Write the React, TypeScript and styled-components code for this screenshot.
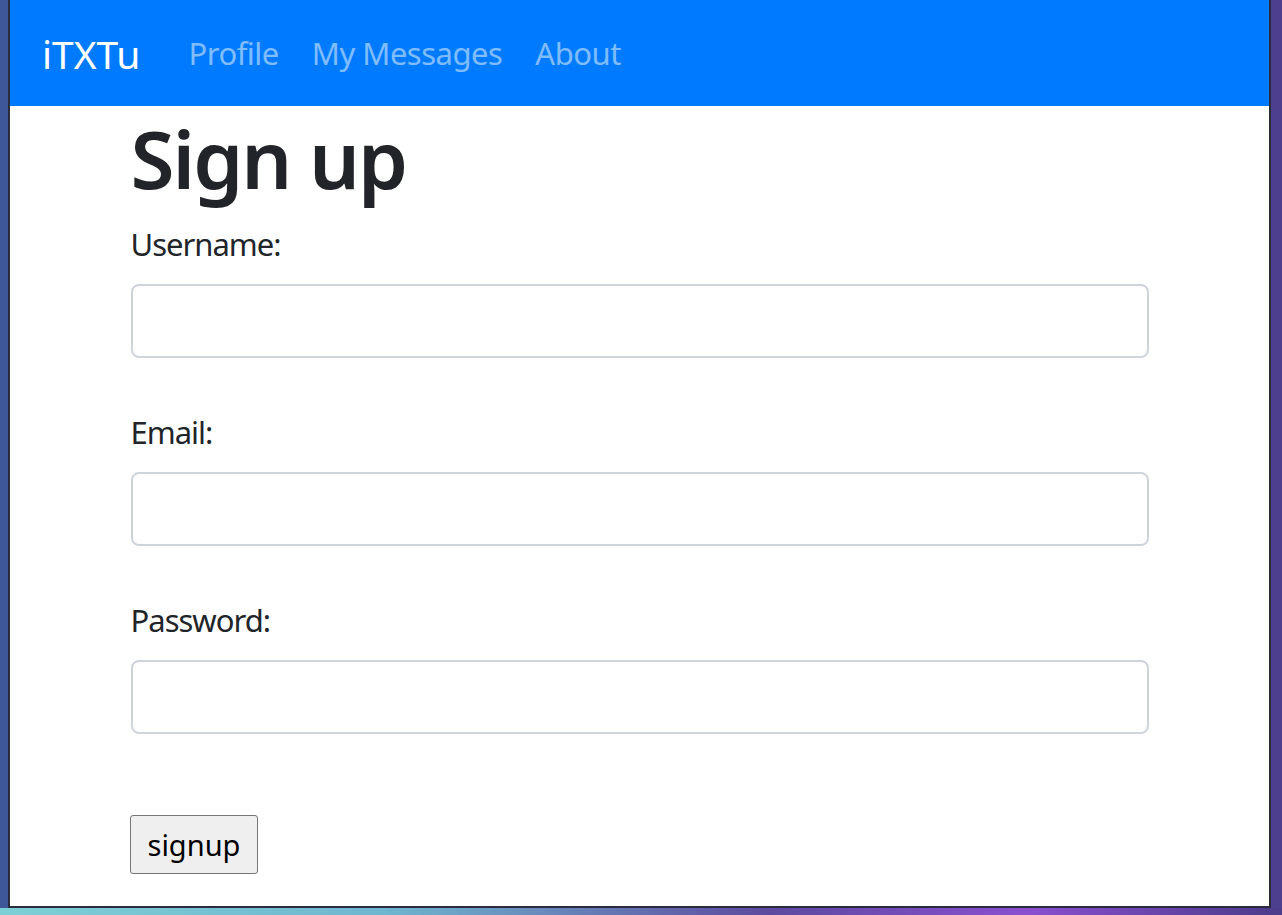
import React from 'react'
import styled, { createGlobalStyle } from 'styled-components'

const GlobalStyle = createGlobalStyle`
  html, body {
    margin: 0;
    padding: 0;
  }
  body {
    font-family: "Noto Sans", "Open Sans", Arial, sans-serif;
    background: linear-gradient(90deg, #3e5799 0%, #44508f 50%, #4d3f8e 100%);
  }
`

const Desktop = styled.div`
  width: 1282px;
  height: 915px;
  box-sizing: border-box;
  padding: 0 11px 0 8px;
  background:
    linear-gradient(90deg, #7dcfd6 0%, #6fb6cf 30%, #5d4aa0 60%, #8a4fd0 80%, #4b3c8a 100%) bottom / 100% 7px no-repeat,
    linear-gradient(90deg, #3e5799 0%, #44508f 50%, #4d3f8e 100%);
  overflow: hidden;
`

const Window = styled.div`
  height: 906px;
  background: #fff;
  border: 2px solid #2a2c3e;
  border-top: 0;
  display: flex;
  flex-direction: column;
`

const Navbar = styled.nav`
  height: 106px;
  flex-shrink: 0;
  background: #007bff;
  display: flex;
  align-items: center;
  padding-left: 32px;
`

const Brand = styled.a`
  font-size: 39px;
  color: #fff;
  text-decoration: none;
  margin-right: 48px;
`

const NavLinks = styled.div`
  display: flex;
  gap: 33px;
`

const NavLink = styled.a`
  font-size: 31px;
  color: rgba(255, 255, 255, 0.5);
  text-decoration: none;
  letter-spacing: -0.5px;
`

const Container = styled.main`
  width: 1078px;
  box-sizing: border-box;
  padding: 0 30px;
  margin: 0 auto;
  color: #212529;
`

const Title = styled.h1`
  font-size: 80px;
  line-height: 96px;
  font-weight: 600;
  margin: 4px 0 14px;
  letter-spacing: -2px;
`

const Field = styled.div<{ $last?: boolean }>`
  display: flex;
  flex-direction: column;
  margin-bottom: ${p => (p.$last ? '81px' : '50px')};
`

const Label = styled.label`
  font-size: 31px;
  line-height: 48px;
  margin-bottom: 16px;
  letter-spacing: -1px;
`

const Input = styled.input`
  height: 74px;
  box-sizing: border-box;
  border: 2px solid #ced4da;
  border-radius: 8px;
  padding: 0 24px;
  font-size: 32px;
  font-family: inherit;
  outline: none;
`

const SubmitButton = styled.button`
  height: 59px;
  margin-left: -1px;
  padding: 0 17px;
  background: #efefef;
  border: 1px solid #767676;
  border-radius: 3px;
  font-family: inherit;
  font-size: 29px;
  color: #000;
`

const App: React.FC = () => {
  return (
    <>
      <GlobalStyle />
      <Desktop>
        <Window>
          <Navbar>
            <Brand href="#">iTXTu</Brand>
            <NavLinks>
              <NavLink href="#">Profile</NavLink>
              <NavLink href="#">My Messages</NavLink>
              <NavLink href="#">About</NavLink>
            </NavLinks>
          </Navbar>
          <Container>
            <Title>Sign up</Title>
            <form onSubmit={e => e.preventDefault()}>
              <Field>
                <Label htmlFor="username">Username:</Label>
                <Input id="username" type="text" />
              </Field>
              <Field>
                <Label htmlFor="email">Email:</Label>
                <Input id="email" type="email" />
              </Field>
              <Field $last>
                <Label htmlFor="password">Password:</Label>
                <Input id="password" type="password" />
              </Field>
              <SubmitButton type="submit">signup</SubmitButton>
            </form>
          </Container>
        </Window>
      </Desktop>
    </>
  )
}

export default App
